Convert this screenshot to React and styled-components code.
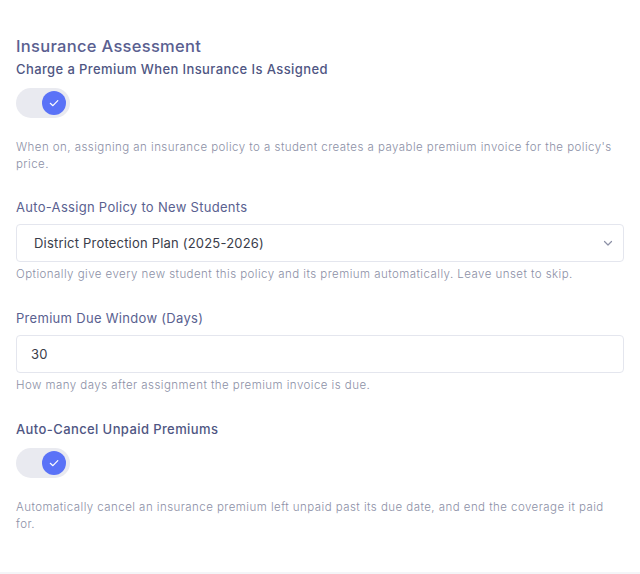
import React from "react";
import styled, { createGlobalStyle } from "styled-components";

const Global = createGlobalStyle`
  html, body { margin: 0; padding: 0; background: #ffffff; }
  body { font-family: Inter, "Open Sans", sans-serif; }
  * { box-sizing: border-box; }
`;

const Page = styled.div`
  width: 640px;
  height: 574px;
  background: #fff;
  border-bottom: 2px solid #f4f5f8;
  padding: 35px 16px 0 16px;
  display: flex;
  flex-direction: column;
`;

const Title = styled.h2`
  margin: 0;
  font-size: 16.5px;
  font-weight: 500;
  color: #5a6090;
  line-height: 22px;
  letter-spacing: 0.3px;
`;

const Field = styled.div`
  display: flex;
  flex-direction: column;
  margin-top: ${(p) => p.$mt || 0}px;
`;

const Label = styled.div`
  font-size: 13px;
  line-height: 18px;
  font-weight: ${(p) => (p.$strong ? 500 : 400)};
  color: ${(p) => (p.$strong ? "#4f5683" : "#5a6190")};
  letter-spacing: ${(p) => (p.$strong ? "0.4px" : "0.3px")};
`;

const Track = styled.div`
  width: 54px;
  height: 30px;
  border-radius: 15px;
  background: #e9eaf0;
  display: flex;
  align-items: center;
  justify-content: flex-end;
  padding-right: 4px;
  margin-top: ${(p) => p.$mt || 0}px;
`;

const Knob = styled.div`
  width: 24px;
  height: 24px;
  border-radius: 50%;
  background: #5a72f7;
  display: flex;
  align-items: center;
  justify-content: center;
`;

const Help = styled.p`
  margin: ${(p) => p.$mt || 0}px 0 0 0;
  font-size: 11.5px;
  line-height: 17px;
  color: #8c90a6;
  letter-spacing: 0.45px;
  font-weight: 300;
`;

const Box = styled.div`
  margin-top: 8px;
  height: 38px;
  border: 1px solid #e4e6ee;
  border-radius: 4px;
  display: flex;
  align-items: center;
  justify-content: space-between;
  padding: 0 ${(p) => (p.$select ? "10px" : "14px")} 0 ${(p) => (p.$select ? "17px" : "14px")};
  font-size: 13px;
  color: #3a3d4a;
  letter-spacing: 0.2px;
`;

const Check = () => (
  <svg width="12" height="12" viewBox="0 0 12 12" fill="none">
    <path d="M2.3 6.3 L4.9 8.7 L9.8 3.6" stroke="#fff" strokeWidth="1.2" strokeLinecap="round" strokeLinejoin="round" />
  </svg>
);

const Chevron = () => (
  <svg width="10" height="10" viewBox="0 0 10 10" fill="none">
    <path d="M1.5 3.5 L5 7 L8.5 3.5" stroke="#8c90a6" strokeWidth="1.2" strokeLinecap="round" strokeLinejoin="round" />
  </svg>
);

const Toggle = ({ mt }) => (
  <Track $mt={mt}>
    <Knob>
      <Check />
    </Knob>
  </Track>
);

export default function App() {
  return (
    <>
      <Global />
      <Page>
        <Title>Insurance Assessment</Title>
        <Field $mt={3}>
          <Label $strong>Charge a Premium When Insurance Is Assigned</Label>
          <Toggle mt={10} />
          <Help $mt={21}>
            When on, assigning an insurance policy to a student creates a payable premium invoice for the policy's price.
          </Help>
        </Field>
        <Field $mt={25}>
          <Label>Auto-Assign Policy to New Students</Label>
          <Box $select>
            <span>District Protection Plan (2025-2026)</span>
            <Chevron />
          </Box>
          <Help $mt={4}>
            Optionally give every new student this policy and its premium automatically. Leave unset to skip.
          </Help>
        </Field>
        <Field $mt={26}>
          <Label>Premium Due Window (Days)</Label>
          <Box>
            <span>30</span>
          </Box>
          <Help $mt={4}>How many days after assignment the premium invoice is due.</Help>
        </Field>
        <Field $mt={26}>
          <Label $strong>Auto-Cancel Unpaid Premiums</Label>
          <Toggle mt={10} />
          <Help $mt={21}>
            Automatically cancel an insurance premium left unpaid past its due date, and end the coverage it paid for.
          </Help>
        </Field>
      </Page>
    </>
  );
}
